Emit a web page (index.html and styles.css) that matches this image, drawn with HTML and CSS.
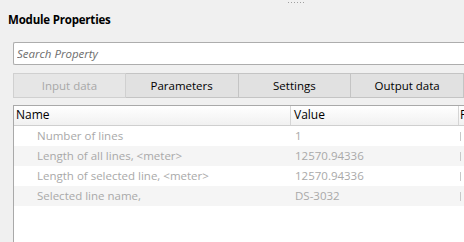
FILE: index.html
```html
<!doctype html>
<html lang="en">
<head>
  <meta charset="utf-8">
  <title>Module Properties</title>
  <link rel="stylesheet" href="styles.css">
</head>
<body>
<div class="grip"><span></span><span></span><span></span><span></span><span></span><span></span></div>
<h1 class="title">Module Properties</h1>

<input class="search" type="text" placeholder="Search Property">

<div class="tabs">
  <button class="tab" disabled>Input data</button>
  <button class="tab">Parameters</button>
  <button class="tab">Settings</button>
  <button class="tab">Output data</button>
</div>

<div class="grid">
  <div class="row head">
    <div class="c-name">Name</div>
    <div class="c-value">Value</div>
    <div class="c-extra">F</div>
  </div>
  <div class="row">
    <div class="c-name">Number of lines</div>
    <div class="c-value">1</div>
    <div class="c-extra"><i></i></div>
  </div>
  <div class="row alt">
    <div class="c-name">Length of all lines, &lt;meter&gt;</div>
    <div class="c-value">12570.94336</div>
    <div class="c-extra"><i></i></div>
  </div>
  <div class="row">
    <div class="c-name">Length of selected line, &lt;meter&gt;</div>
    <div class="c-value">12570.94336</div>
    <div class="c-extra"><i></i></div>
  </div>
  <div class="row alt">
    <div class="c-name">Selected line name,</div>
    <div class="c-value">DS-3032</div>
    <div class="c-extra"><i></i></div>
  </div>
</div>
</body>
</html>
```

FILE: styles.css
```css
body {
  margin: 0;
  width: 464px;
  height: 242px;
  overflow: hidden;
  background: #f0f0f0;
  font-family: "Open Sans", "Noto Sans", sans-serif;
  font-size: 11.5px;
  color: #000;
}

.grip {
  display: flex;
  justify-content: center;
  gap: 2px;
  padding-top: 2px;
  padding-left: 128px;
  height: 3px;
}

.grip span {
  width: 1px;
  height: 1px;
  background: #a0a0a0;
}

.title {
  margin: 7px 0 0 8px;
  font-size: 11.5px;
  font-weight: bold;
  line-height: 16px;
  letter-spacing: -0.2px;
}

.search {
  display: block;
  box-sizing: border-box;
  margin: 14px 0 0 13px;
  width: 460px;
  height: 23px;
  padding: 0 3px;
  border: 1px solid #adadad;
  border-right: none;
  border-radius: 2px 0 0 2px;
  background: #fff;
  font-family: inherit;
  font-size: 11.5px;
  outline: none;
}

.search::placeholder {
  color: #6d6d6d;
  font-style: italic;
}

.tabs {
  display: flex;
  margin: 8px 0 0 13px;
}

.tab {
  box-sizing: border-box;
  width: 113px;
  height: 25px;
  margin: 0;
  padding: 0;
  border: 1px solid #c4c4c4;
  border-left-width: 0;
  background: #e1e1e1;
  font-family: inherit;
  font-size: 11.5px;
  color: #000;
}

.tab:first-child {
  border-left-width: 1px;
}

.tab:disabled {
  background: #e6e6e6;
  color: #a8a8a8;
  border-color: #d0d0d0;
}

.grid {
  box-sizing: border-box;
  margin: 7px 0 0 13px;
  height: 140px;
  background: #fff;
  border: 1px solid #a9a9a9;
  border-right: none;
}

.row {
  display: flex;
  height: 20px;
  line-height: 20px;
  color: #a9a9a9;
}

.row.alt {
  background: #f5f5f5;
}

.row.head {
  height: 19px;
  line-height: 18px;
  color: #000;
  background: linear-gradient(#fff, #f1f1f1);
  border-bottom: 1px solid #cfcfcf;
  font-size: 12px;
}

.c-name {
  width: 277px;
  padding-left: 23px;
  box-sizing: border-box;
  white-space: nowrap;
}

.row.head .c-name {
  padding-left: 2px;
  border-right: 1px solid #d5d5d5;
}

.c-value {
  width: 168px;
  padding-left: 4px;
  box-sizing: border-box;
  white-space: nowrap;
}

.row.head .c-value {
  padding-left: 3px;
  border-right: 1px solid #d5d5d5;
}

.c-extra {
  flex: 1;
  padding-left: 1px;
  overflow: hidden;
}

.c-extra i {
  display: inline-block;
  width: 1px;
  height: 9px;
  margin-top: 6px;
  vertical-align: top;
  background: #c8c8c8;
}
```
